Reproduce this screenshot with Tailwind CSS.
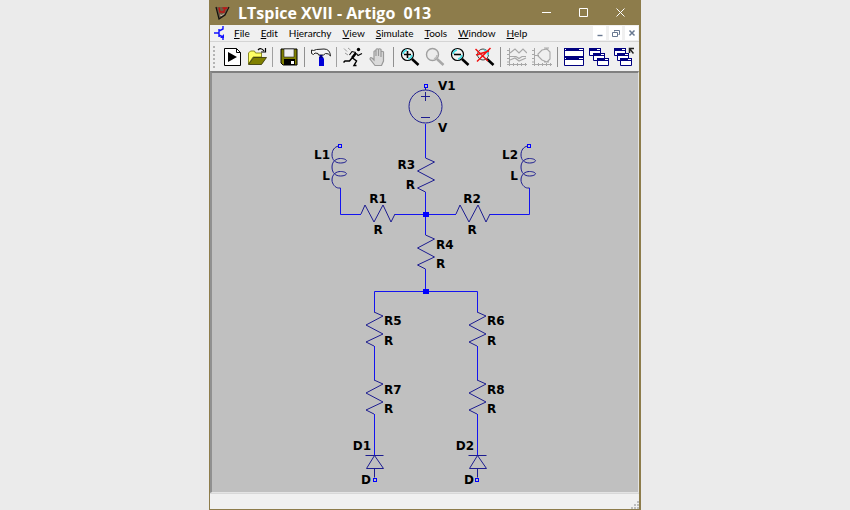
<!DOCTYPE html>
<html lang="en">
<head>
  <meta charset="UTF-8">
  <meta name="viewport" content="width=device-width, initial-scale=1.0">
  <title>LTspice XVII - Artigo 013</title>
  <script src="https://cdn.jsdelivr.net/npm/@tailwindcss/browser@4"></script>
</head>
<body class="bg-[#ebebeb] font-['Open_Sans',sans-serif] text-black">

  <div class="mx-auto flex h-screen w-full max-w-[432px] flex-col border-b border-l border-r-2 border-[#8d7c4b] bg-[#f0f0f0]">

    <!-- title bar -->
    <header class="flex h-[25px] shrink-0 items-center bg-[#8d7c4b] text-white">
      <svg class="ml-[5px] size-4 shrink-0" viewBox="0 0 16 16" fill="none">
        <path d="M1 2h12l-3 8-6 4z" fill="#6e5a42"/>
        <path d="M1 2l3 12 6-4 4-8" stroke="#111" stroke-width="1.200"/>
        <path d="M4 2.500L5 7h3M7.500 3h5M10 3L8.500 8" stroke="#c01414" stroke-width="1.400"/>
        <path d="M5 10l2 .5 2-2" stroke="#e8e0d0" stroke-width=".8"/>
      </svg>
      <h1 class="ml-[7px] text-[16px] leading-6 font-bold whitespace-pre">LTspice XVII - Artigo  013</h1>
      <div class="ml-auto flex">
        <button aria-label="Minimize" class="flex h-6 w-[37px] items-center justify-center"><svg class="size-[9px]" viewBox="0 0 9 9"><path d="M0 4.500h9" stroke="#fff"/></svg></button>
        <button aria-label="Maximize" class="flex h-6 w-[37px] items-center justify-center"><svg class="size-[9px]" viewBox="0 0 9 9"><path d="M.5.5h8v8h-8z" stroke="#fff" fill="none"/></svg></button>
        <button aria-label="Close" class="flex h-6 w-[37px] items-center justify-center"><svg class="size-[9px]" viewBox="0 0 9 9"><path d="M.5.5l8 8M8.500.5l-8 8" stroke="#fff"/></svg></button>
      </div>
    </header>

    <!-- menu -->
    <nav class="flex h-[17px] shrink-0 items-center border-b border-[#d4d4d4] font-['Lato',sans-serif] text-[10px] leading-4">
      <svg class="mr-2 ml-1 h-[14px] w-3 shrink-0" viewBox="0 0 12 14" fill="none" stroke="#1010ff" stroke-width="1.400">
        <path d="M0 7h5M5 3v8M5 5l4-2V0M5 9l4 2v3"/>
        <path d="M10 8v4H6z" fill="#1010ff" stroke="none"/>
      </svg>
      <div class="flex gap-[11px]">
        <button><u>F</u>ile</button>
        <button><u>E</u>dit</button>
        <button>H<u>i</u>erarchy</button>
        <button><u>V</u>iew</button>
        <button><u>S</u>imulate</button>
        <button><u>T</u>ools</button>
        <button><u>W</u>indow</button>
        <button><u>H</u>elp</button>
      </div>
      <div class="mr-px ml-auto flex gap-[3px]">
        <button aria-label="Minimize sheet" class="flex h-[14px] w-[13px] items-center justify-center bg-white"><svg class="size-2" viewBox="0 0 8 8"><path d="M1.500 6.500h5" stroke="#687890" stroke-width="1.400"/></svg></button>
        <button aria-label="Restore sheet" class="flex h-[14px] w-[13px] items-center justify-center bg-white"><svg class="size-2" viewBox="0 0 8 8" fill="none" stroke="#687890"><path d="M2.500 2.500v-1h5v4h-1M.5 3.500h5v4h-5zM2 1.500h5"/></svg></button>
        <button aria-label="Close sheet" class="flex h-[14px] w-[13px] items-center justify-center bg-white"><svg class="size-2" viewBox="0 0 8 8"><path d="M1.500 1.500l5 5M6.500 1.500l-5 5" stroke="#687890" stroke-width="1.500"/></svg></button>
      </div>
    </nav>

    <!-- toolbar -->
    <div class="flex h-[29px] shrink-0 items-center">
      <svg class="mr-1 ml-[3px] h-[22px] w-0.5 shrink-0" viewBox="0 0 2 22"><path d="M1 0v22" stroke="#b4b4b4" stroke-width="2" stroke-dasharray="2 2"/></svg>

      <button aria-label="New schematic" class="flex h-6 w-[25px] shrink-0 items-center justify-center">
        <svg class="size-5" viewBox="0 0 20 20"><path d="M2.500 1.500h12l4 4v13h-16z" fill="#fff" stroke="#000"/><path d="M14.500 1.500v4h4" fill="none" stroke="#000"/><path d="M6 5l9 5-9 5z"/></svg>
      </button>
      <button aria-label="Open" class="flex h-6 w-[25px] shrink-0 items-center justify-center">
        <svg class="size-5" viewBox="0 0 20 20" stroke-width=".8"><path d="M1.500 17V6l2-2h4l1 2h6v4H6z" fill="#ffff66" stroke="#707000"/><path d="M1.500 17.500l5-7h13l-5 7z" fill="#808000" stroke="#303000"/><path d="M11 3q3-3 6 1M18.500 1v4H14" fill="none" stroke="#000" stroke-width="1.200"/></svg>
      </button>
      <span class="flex h-6 w-[7px] shrink-0 justify-center"><span class="h-5 w-px self-center bg-[#a0a0a0]"></span></span>
      <button aria-label="Save" class="flex h-6 w-[25px] shrink-0 items-center justify-center">
        <svg class="size-5" viewBox="0 0 20 20"><path d="M2 2h16v16H4l-2-2z" fill="#808000" stroke="#000"/><path d="M5 2h10v8H5z" fill="#f0f0f0" stroke="#222" stroke-width=".6"/><path d="M5 12h11v6H5z"/><path d="M12 14h3v3h-3z" fill="#fff"/></svg>
      </button>
      <span class="flex h-6 w-[7px] shrink-0 justify-center"><span class="h-5 w-px self-center bg-[#909090]"></span></span>
      <button aria-label="Control panel" class="flex h-6 w-[25px] shrink-0 items-center justify-center">
        <svg class="size-5" viewBox="0 0 20 20"><path d="M.5 3l2 .5 3-1L13 2q6 0 6.500 7-2-3-5-2.500L12.500 8h-5L7 6.500 4 6 2.500 7.500l-2-1z" fill="#f4f4f4" stroke="#222"/><path d="M8 10h4l1 2v7H8v-7z" fill="#0000d8"/><path d="M10 8v3" stroke="#000080" stroke-width="3"/></svg>
      </button>
      <span class="flex h-6 w-[7px] shrink-0 justify-center"><span class="h-5 w-px self-center bg-[#a0a0a0]"></span></span>
      <button aria-label="Run" class="flex h-6 w-[25px] shrink-0 items-center justify-center">
        <svg class="size-5" viewBox="0 0 20 20" fill="none" stroke="#000"><circle cx="15.500" cy="2.500" r="1.700" fill="#000" stroke="none"/><path d="M13 6L9 11" stroke-width="2.600"/><path d="M13 5.500L9 4.500 6.500 8M13.500 6.500l1.500 2 4-2" stroke-width="1.100"/><path d="M9.500 11l4 3-2.500 4.500h2.500M9 11L6.500 14H2L.5 15.500" stroke-width="1.500"/><path d="M1 1.500l3 3M5 1l2.500 2M2 6l3 2" stroke="#777" stroke-width=".7"/></svg>
      </button>
      <button aria-label="Halt" class="flex h-6 w-[25px] shrink-0 items-center justify-center">
        <svg class="size-5" viewBox="0 0 20 20" fill="#dadada" stroke="#999"><path d="M7 18.500L2 12q0-2 2-1l2 2V4.500q1-1.500 2 0V9 2.500q1-1.500 2.500 0V9 2.500q1-1.500 2.500 0V10 5q1-1.500 2.500 0v9l-2 4.500z" stroke-width="1.200"/></svg>
      </button>
      <span class="flex h-6 w-[7px] shrink-0 justify-center"><span class="h-5 w-px self-center bg-[#909090]"></span></span>
      <button aria-label="Zoom in" class="flex h-6 w-[25px] shrink-0 items-center justify-center">
        <svg class="size-5" viewBox="0 0 20 20" fill="none"><circle cx="7.500" cy="7.500" r="6" fill="#f4f4f4" stroke="#000" stroke-width="1.200"/><path d="M3 7a5 5 0 0 1 4-4M12 8a5 5 0 0 1-4 4" stroke="#40e0e8" stroke-width="1.400"/><path d="M12 12l6.500 6" stroke="#000" stroke-width="2.600"/><path d="M4 7.500h7M7.500 4v7" stroke="#000" stroke-width="1.600"/></svg>
      </button>
      <button aria-label="Pan" class="flex h-6 w-[25px] shrink-0 items-center justify-center">
        <svg class="size-5" viewBox="0 0 20 20" fill="none"><circle cx="7.500" cy="7.500" r="6" fill="#ececec" stroke="#a0a0a0" stroke-width="1.400"/><path d="M12 12l6.500 6" stroke="#a8a8a8" stroke-width="2.600"/><path d="M9 12q3-1 3-4" stroke="#bbb" stroke-width="1.500"/></svg>
      </button>
      <button aria-label="Zoom out" class="flex h-6 w-[25px] shrink-0 items-center justify-center">
        <svg class="size-5" viewBox="0 0 20 20" fill="none"><circle cx="7.500" cy="7.500" r="6" fill="#f4f4f4" stroke="#000" stroke-width="1.200"/><path d="M3 7a5 5 0 0 1 4-4M12 8a5 5 0 0 1-4 4" stroke="#40e0e8" stroke-width="1.400"/><path d="M12 12l6.500 6" stroke="#000" stroke-width="2.600"/><path d="M4 7.500h7" stroke="#000" stroke-width="1.600"/></svg>
      </button>
      <button aria-label="Zoom full extents" class="flex h-6 w-[25px] shrink-0 items-center justify-center">
        <svg class="size-5" viewBox="0 0 20 20" fill="none"><circle cx="8" cy="7.500" r="5.500" fill="#e4eeee" stroke="#444"/><path d="M9 3q4 1 4 5" stroke="#40e0e8" stroke-width="1.800"/><path d="M12 12l6.500 6" stroke="#000" stroke-width="2.600"/><path d="M.5 2L13 14M15.500 1L2 14.500M1 8l13-4" stroke="#f01010" stroke-width="1.500"/></svg>
      </button>
      <span class="flex h-6 w-[7px] shrink-0 justify-center"><span class="h-5 w-px self-center bg-[#909090]"></span></span>
      <button aria-label="Autorange" class="flex h-6 w-[25px] shrink-0 items-center justify-center">
        <svg class="size-5" viewBox="0 0 20 20" fill="none" stroke="#a8a8a8"><path d="M2.500 1v18M0 17.500h20"/><path d="M0 3.500h3M0 7.500h3M0 11.500h3M0 15h3M6.500 16v3M10.500 16v3M14.500 16v3M18.500 16v3"/><path d="M3 6l5-4 4 4 4-4 4 4M3 9.500h6l3 2 3-2h4M3 13l5-2 4 3 7-3" stroke-width="1.200"/></svg>
      </button>
      <button aria-label="Pick visible traces" class="flex h-6 w-[25px] shrink-0 items-center justify-center">
        <svg class="size-5" viewBox="0 0 20 20" fill="none" stroke="#a8a8a8"><path d="M2.500 1v18M0 17.500h20"/><path d="M0 3.500h3M0 7.500h3M0 11.500h3M0 15h3M6.500 16v3M10.500 16v3M14.500 16v3M18.500 16v3"/><path d="M15 2l-5 1-4 4v2l4 4 5 2M15 2l3 3v7l-3 3M3 8.500h4M12 1h5M12 15h5" stroke-width="1.100"/></svg>
      </button>
      <span class="flex h-6 w-[7px] shrink-0 justify-center"><span class="h-5 w-px self-center bg-[#909090]"></span></span>
      <button aria-label="Tile windows" class="flex h-6 w-[25px] shrink-0 items-center justify-center">
        <svg class="size-5" viewBox="0 0 20 20"><path d="M.5 1.500h19v8H.5zM.5 10.500h19v8H.5z" fill="#fff" stroke="#000080"/><path d="M0 1h20v3H0zM0 9h20v4H0z" fill="#000080"/><path d="M1 2.500h1M15 2.500h4M1 11.500h1M15 11.500h4" stroke="#fff"/></svg>
      </button>
      <button aria-label="Cascade windows" class="flex h-6 w-[25px] shrink-0 items-center justify-center">
        <svg class="size-5" viewBox="0 0 20 20"><g fill="#fff" stroke="#000080"><path d="M.5 1.500h11v7H.5zM4.500 6.500h11v7h-11zM8.500 11.500h11v7h-11z"/></g><path d="M0 1h12v3H0zM4 6h12v3H4zM8 11h12v3H8z" fill="#000080"/><path d="M8 2.500h3M12 7.500h3M16 12.500h3" stroke="#fff"/></svg>
      </button>
      <button aria-label="Close windows" class="flex h-6 w-[25px] shrink-0 items-center justify-center">
        <svg class="size-5" viewBox="0 0 20 20"><g fill="#fff" stroke="#000080"><path d="M.5 1.500h11v7H.5zM3.500 6.500h11v7h-11zM6.500 11.500h11v7h-11z"/></g><path d="M0 1h12v3H0zM3 6h12v3H3zM6 11h12v3H6z" fill="#000080"/><path d="M8 2.500h3M11 7.500h3M14 12.500h3" stroke="#fff"/><path d="M15.500 6V1.500H20M15.500 1.500l4 5" fill="none" stroke="#222" stroke-width="1.500"/></svg>
      </button>
    </div>

    <!-- schematic sheet -->
    <main class="flex min-h-0 flex-1 justify-center overflow-hidden border-t-2 border-r border-b border-l-2 border-t-[#808080] border-r-[#e4e4e4] border-b-[#e4e4e4] border-l-[#909090] bg-[#c0c0c0]">
      <svg class="h-[418px] w-[426px] shrink-0" viewBox="212 73 426 418" fill="none" font-family="'DejaVu Sans', sans-serif" font-size="12" font-weight="bold">
        <defs>
          <path id="res" d="M0 0L9 4-8 13 9 22-8 30 0 34"/>
          <path id="resh" d="M0 0L4-9 13 8 22-9 30 8 34 0"/>
          <path id="ind" d="M-2 0C-6 1-8.500 4-8.500 9C-8.500 14-5 17 0 17C4 17 6 15.500 6 14.800C6 13.500 3 12.500 0 12.500C-4 12.500-8.500 15-8.500 21C-8.500 27-5 30 0 30C4 30 6 28.500 6 27.800C6 26.500 3 25.500 0 25.500C-4 25.500-8.500 28-8.500 34C-8.500 38-5 42-2 42H0"/>
          <path id="dio" d="M-9 0H9M0 0L-8 13H9ZM0 13V22"/>
          <rect id="pin" x="-1.500" y="-1.500" width="3" height="3"/>
        </defs>

        <!-- wires -->
        <path stroke="#1414f0" d="M340.500 188V214.500H361M395 214.500H456M490 214.500H529.500V188M425.500 124V158M425.500 192V235M425.500 269V291.500M374.500 312V291.500H477.500V312M374.500 346V380M477.500 346V380M374.500 414V456M477.500 414V456"/>
        <path fill="#0000ff" d="M423 212h6v5h-6zM423 289h6v5h-6z"/>

        <!-- components -->
        <g stroke="#1c1c90">
          <circle cx="425.500" cy="106.500" r="16.500"/>
          <path d="M421 96.500h9M425.500 92v9M421 117.500h9M425.500 87v3"/>
          <use href="#res" x="425.500" y="158"/>
          <use href="#res" x="425.500" y="235"/>
          <use href="#res" x="374" y="312"/>
          <use href="#res" x="477" y="312"/>
          <use href="#res" x="374" y="380"/>
          <use href="#res" x="477" y="380"/>
          <use href="#resh" x="361" y="214"/>
          <use href="#resh" x="456" y="214"/>
          <use href="#ind" x="340.500" y="146"/>
          <use href="#ind" x="529.500" y="146"/>
          <use href="#dio" x="374.500" y="455.500"/>
          <use href="#dio" x="477.500" y="455.500"/>
        </g>

        <!-- open pins -->
        <g stroke="#0000ff" fill="#c0c0c0">
          <use href="#pin" x="426" y="86"/>
          <use href="#pin" x="340" y="146"/>
          <use href="#pin" x="529" y="146"/>
          <use href="#pin" x="375" y="480"/>
          <use href="#pin" x="477" y="480"/>
        </g>

        <!-- labels -->
        <g fill="#000">
          <text x="438" y="90">V1</text><text x="438" y="132">V</text>
          <text x="436" y="249">R4</text><text x="436" y="268">R</text>
          <text x="384" y="325">R5</text><text x="384" y="345">R</text>
          <text x="487" y="325">R6</text><text x="487" y="345">R</text>
          <text x="384" y="394">R7</text><text x="384" y="413">R</text>
          <text x="487" y="394">R8</text><text x="487" y="413">R</text>
        </g>
        <g fill="#000" text-anchor="middle">
          <text x="378" y="203">R1</text><text x="378" y="234">R</text>
          <text x="472" y="203">R2</text><text x="472" y="234">R</text>
        </g>
        <g fill="#000" text-anchor="end">
          <text x="415" y="169">R3</text><text x="415" y="189">R</text>
          <text x="330" y="159">L1</text><text x="330" y="180">L</text>
          <text x="518" y="159">L2</text><text x="518" y="180">L</text>
          <text x="371" y="450">D1</text><text x="371" y="484">D</text>
          <text x="474" y="450">D2</text><text x="474" y="484">D</text>
        </g>
      </svg>
    </main>

    <!-- status bar -->
    <footer class="flex h-4 shrink-0 items-end justify-end border-t border-[#d8d8d8]">
      <svg class="size-2" viewBox="0 0 8 8" fill="#bcbcbc"><path d="M0 6h2v2H0zM3 6h2v2H3zM6 6h2v2H6zM3 3h2v2H3zM6 3h2v2H6zM6 0h2v2H6z"/></svg>
    </footer>
  </div>

</body>
</html>
